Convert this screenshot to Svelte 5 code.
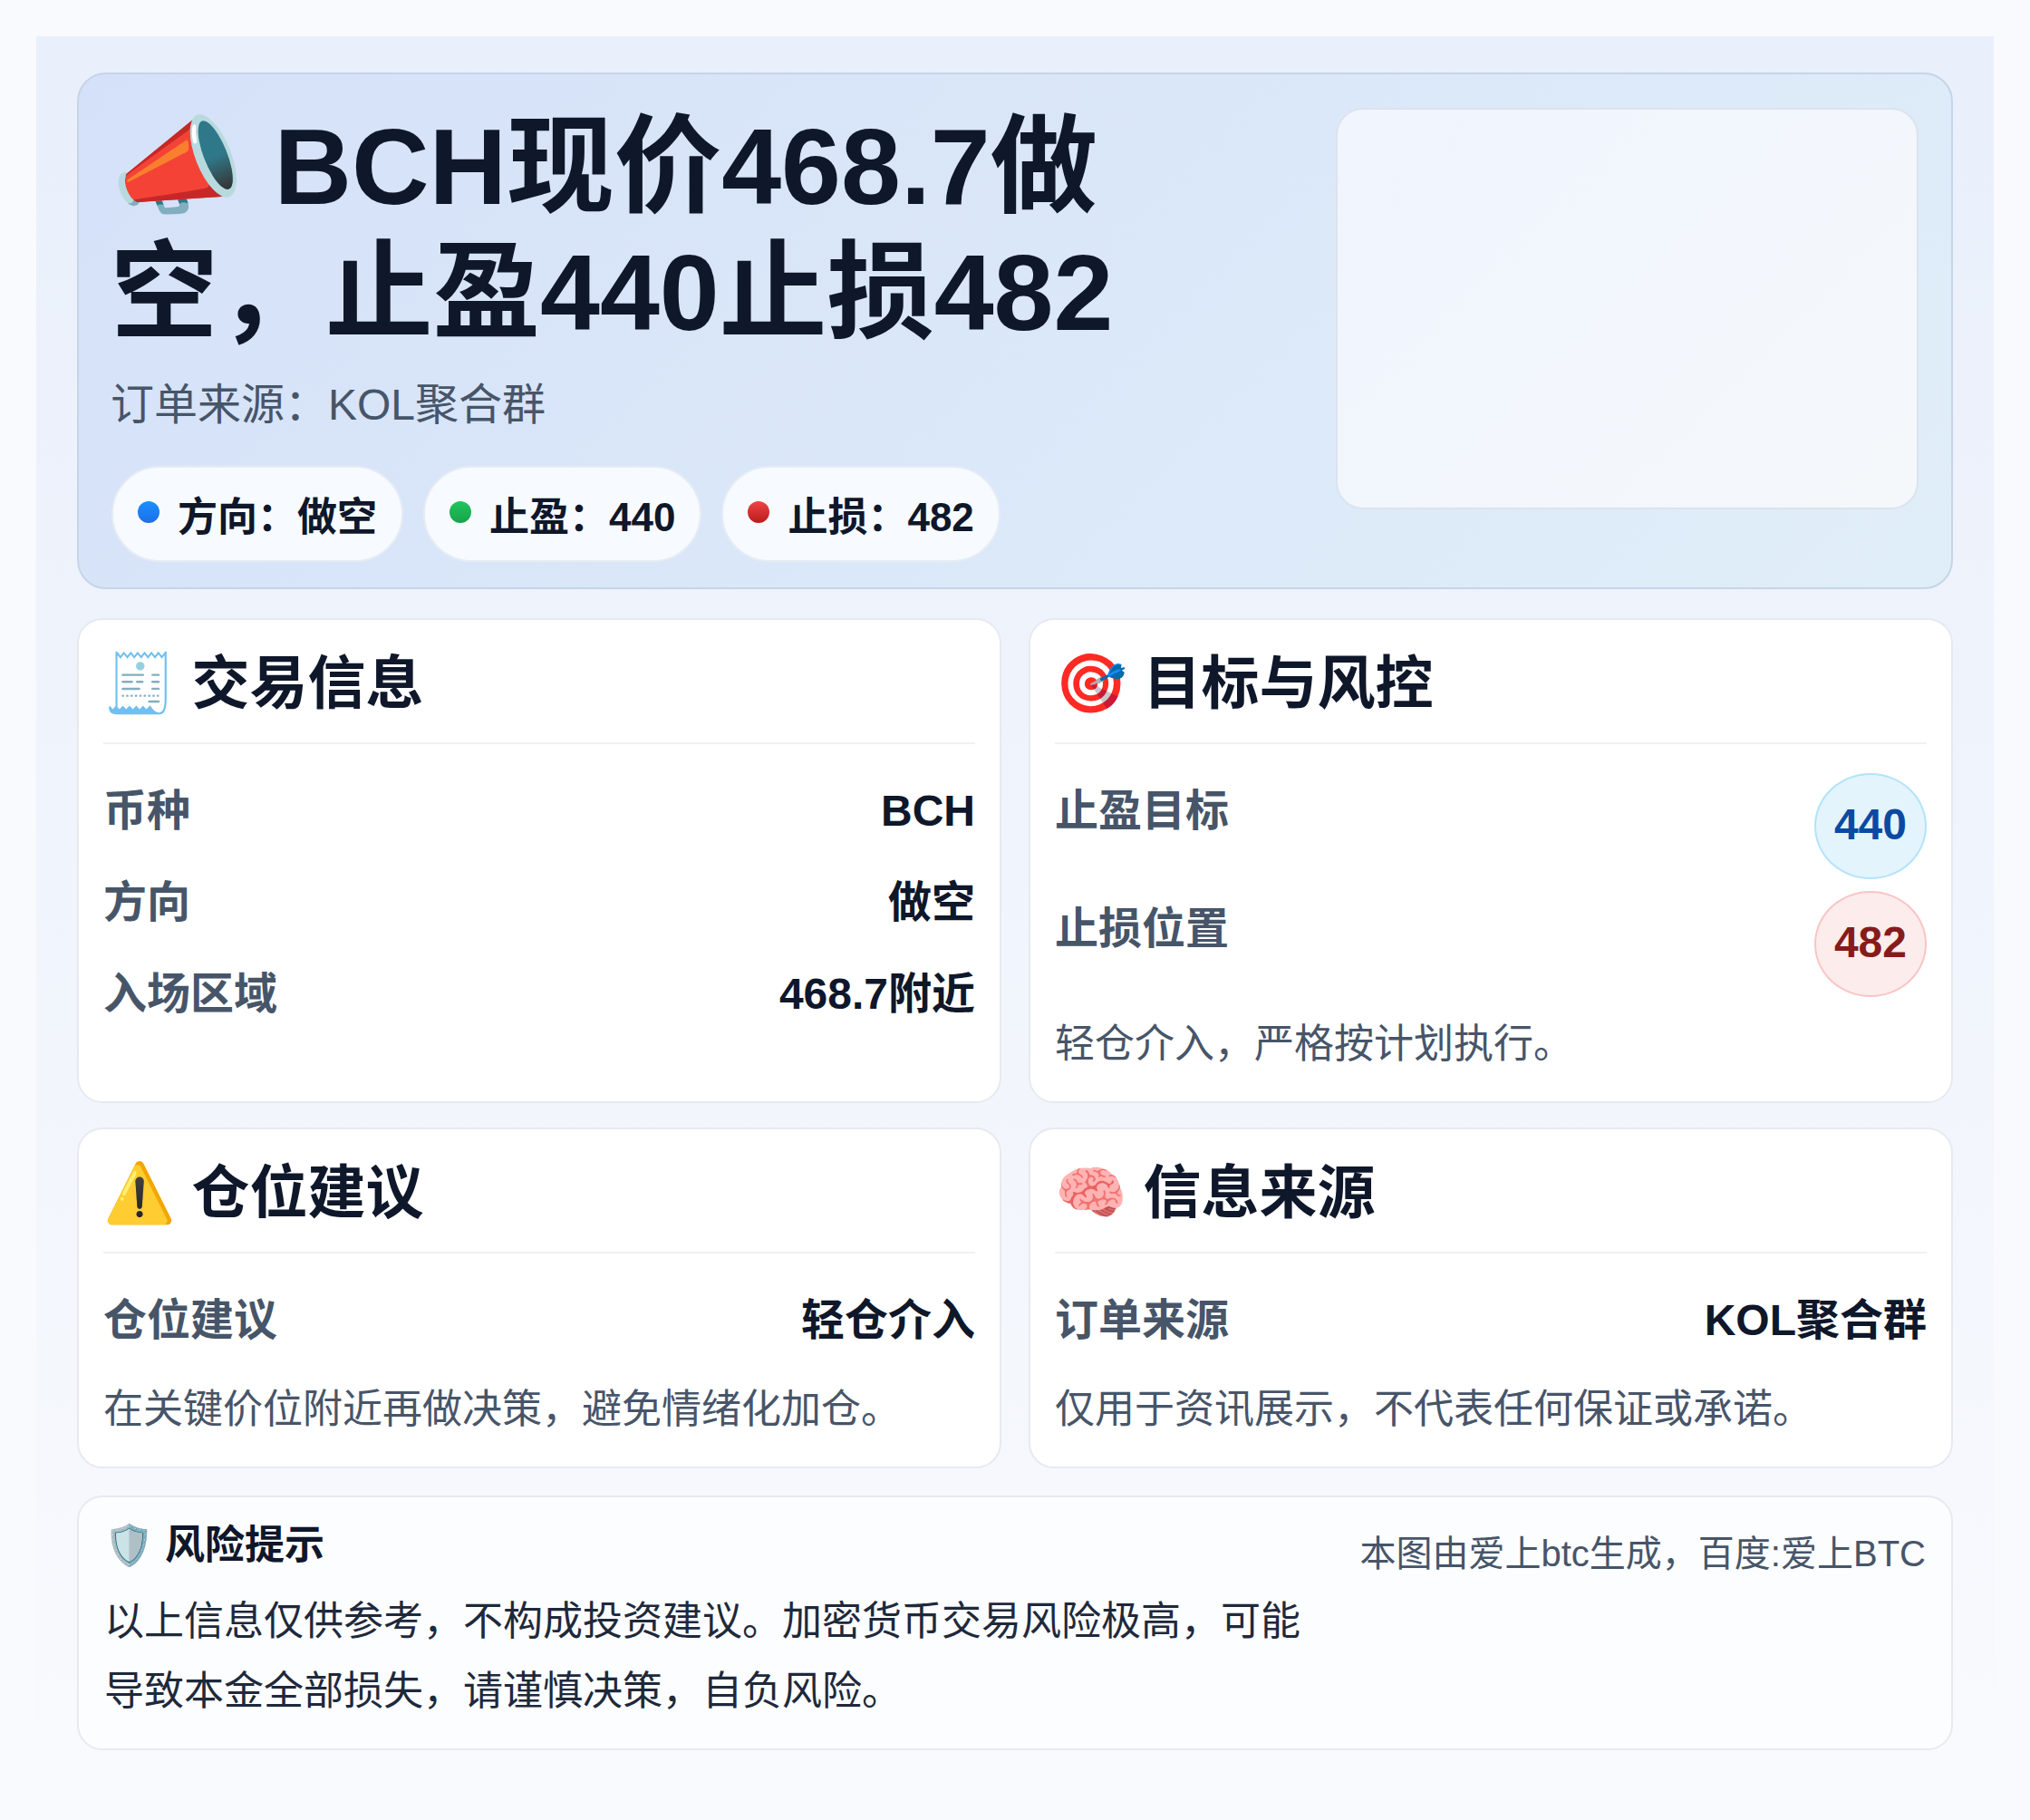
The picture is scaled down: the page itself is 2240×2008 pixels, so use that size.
<script>
    const pills = [
        { color: "blue", text: "方向：做空" },
        { color: "green", text: "止盈：440" },
        { color: "red", text: "止损：482" },
    ];

    const tradeRows = [
        { label: "币种", value: "BCH" },
        { label: "方向", value: "做空" },
        { label: "入场区域", value: "468.7附近" },
    ];
</script>

<div class="page">
    <div class="hero">
        <div class="hero-main">
            <h1>📣 BCH现价468.7做空，止盈440止损482</h1>
            <div class="subtitle">订单来源：KOL聚合群</div>
            <div class="pills">
                {#each pills as pill}
                    <div class="pill">
                        <span class="dot {pill.color}"></span>
                        {pill.text}
                    </div>
                {/each}
            </div>
        </div>
        <div class="hero-image"></div>
    </div>

    <div class="grid">
        <section class="card">
            <h2>🧾 交易信息</h2>
            {#each tradeRows as row}
                <div class="row">
                    <span class="label">{row.label}</span>
                    <span class="value">{row.value}</span>
                </div>
            {/each}
        </section>

        <section class="card">
            <h2>🎯 目标与风控</h2>
            <div class="row tall">
                <span class="label">止盈目标</span>
                <span class="chip profit">440</span>
            </div>
            <div class="row tall">
                <span class="label">止损位置</span>
                <span class="chip loss">482</span>
            </div>
            <p class="note">轻仓介入，严格按计划执行。</p>
        </section>

        <section class="card">
            <h2>⚠️ 仓位建议</h2>
            <div class="row">
                <span class="label">仓位建议</span>
                <span class="value">轻仓介入</span>
            </div>
            <p class="note">在关键价位附近再做决策，避免情绪化加仓。</p>
        </section>

        <section class="card">
            <h2>🧠 信息来源</h2>
            <div class="row">
                <span class="label">订单来源</span>
                <span class="value">KOL聚合群</span>
            </div>
            <p class="note">仅用于资讯展示，不代表任何保证或承诺。</p>
        </section>
    </div>

    <div class="footer">
        <div class="risk">
            <div class="risk-title">🛡️ 风险提示</div>
            <p>以上信息仅供参考，不构成投资建议。加密货币交易风险极高，可能导致本金全部损失，请谨慎决策，自负风险。</p>
        </div>
        <div class="credit">本图由爱上btc生成，百度:爱上BTC</div>
    </div>
</div>

<style>
    :global(body) {
        margin: 0;
        background: #f8fafd;
    }

    .page {
        margin: 40px;
        padding: 40px 45px;
        background: linear-gradient(180deg, #e9effb 0%, #f8fafd 100%);
        color: #0f172a;
        font-family: "Liberation Sans", "Noto Sans CJK SC", "Noto Color Emoji", sans-serif;
    }

    .hero {
        display: flex;
        justify-content: space-between;
        align-items: flex-start;
        margin-bottom: 32px;
        padding: 33px 36px 28px 35px;
        border: 2px solid #c6d4e8;
        border-radius: 32px;
        background: linear-gradient(135deg, #d5e1f8 0%, #e0eef9 100%);
    }

    .hero-main {
        width: 1200px;
    }

    h1 {
        margin: 0;
        font-size: 118.5px;
        line-height: 139px;
        font-weight: 700;
    }

    .subtitle {
        margin-top: 16px;
        font-size: 48px;
        line-height: 1.6;
        color: #475569;
    }

    .pills {
        display: flex;
        gap: 22px;
        margin: 28px 0 0 1px;
    }

    .pill {
        display: flex;
        align-items: center;
        gap: 20px;
        height: 102px;
        padding: 0 27px;
        border: 2px solid #e6ecf4;
        border-radius: 53px;
        background: #f7fbff;
        font-size: 44px;
        font-weight: 700;
    }

    .dot {
        width: 24px;
        height: 24px;
        margin-bottom: 4px;
        border-radius: 50%;
    }

    .dot.blue {
        background: linear-gradient(180deg, #1b8fff, #1d6fe8);
    }

    .dot.green {
        background: linear-gradient(180deg, #22c55e, #16a34a);
    }

    .dot.red {
        background: linear-gradient(180deg, #ef4444, #b91c1c);
    }

    .hero-image {
        box-sizing: border-box;
        width: 643px;
        height: 443px;
        margin-top: 4px;
        border: 2px solid #dce3ee;
        border-radius: 30px;
        background: linear-gradient(135deg, #f0f5fe 0%, #f4f8fb 100%);
    }

    .grid {
        display: grid;
        grid-template-columns: 1fr 1fr;
        gap: 27px 30px;
        margin-bottom: 30px;
    }

    .card {
        padding: 32px 27px 28px;
        border: 2px solid #e6eaf0;
        border-radius: 28px;
        background: #fff;
    }

    h2 {
        margin: 0 0 32px;
        padding-bottom: 26px;
        border-bottom: 2px solid #eff1f4;
        font-size: 64px;
        line-height: 77px;
        font-weight: 700;
    }

    .row {
        display: flex;
        justify-content: space-between;
        align-items: flex-start;
        padding-bottom: 18px;
        font-size: 48px;
        line-height: 83px;
        font-weight: 700;
    }

    .row.tall {
        padding-bottom: 13px;
    }

    .label {
        color: #475569;
    }

    .chip {
        padding: 16px 20px 20px;
        border: 2px solid;
        border-radius: 50%;
        line-height: 77px;
    }

    .chip.profit {
        border-color: #b3e3fa;
        background: #e3f4fd;
        color: #0b4aa2;
    }

    .chip.loss {
        border-color: #f9c5c5;
        background: #fcecec;
        color: #861b1b;
    }

    .note {
        margin: 4px 0 0;
        font-size: 44px;
        line-height: 70px;
        color: #475569;
    }

    .footer {
        display: flex;
        justify-content: space-between;
        align-items: flex-start;
        gap: 40px;
        padding: 30px 28px 25px;
        border: 2px solid #e6eaf0;
        border-radius: 28px;
        background: #fcfdff;
    }

    .risk {
        flex: 1;
    }

    .risk-title {
        font-size: 44px;
        line-height: 46px;
        font-weight: 700;
    }

    .risk p {
        margin: 22px 0 0;
        font-size: 44px;
        line-height: 77px;
        color: #1e293b;
    }

    .credit {
        font-size: 40px;
        line-height: 64px;
        color: #475569;
        white-space: nowrap;
    }
</style>
